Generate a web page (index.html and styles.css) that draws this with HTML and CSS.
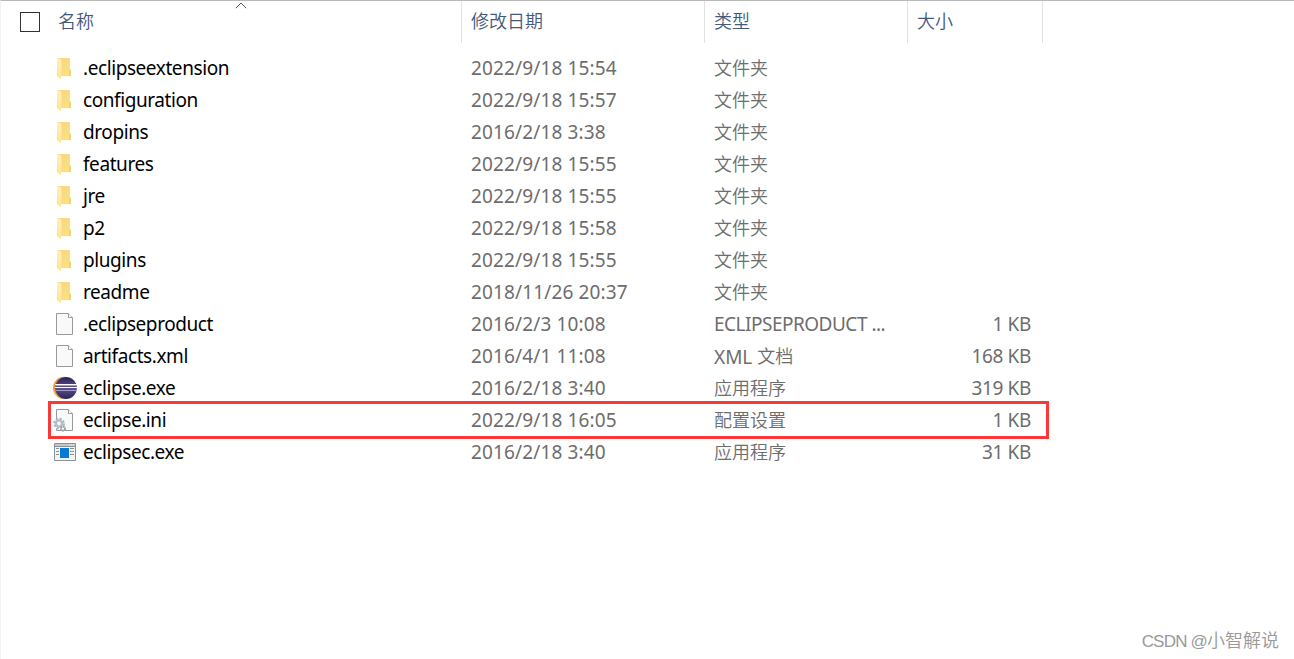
FILE: index.html
```html
<!DOCTYPE html>
<html lang="zh-CN">
<head>
    <meta charset="UTF-8">
    <title>eclipse</title>
    <link rel="stylesheet" href="styles.css">
</head>
<body>
    <svg class="defs" aria-hidden="true">
        <defs>
            <linearGradient id="back" x1="0" y1="0" x2="1" y2="1"><stop offset="0" stop-color="#f5d67d"/><stop offset="1" stop-color="#fddf83"/></linearGradient>
            <linearGradient id="front" x1="0" y1="0" x2="0" y2="1"><stop offset="0" stop-color="#fff0bb"/><stop offset="1" stop-color="#fee493"/></linearGradient>
            <linearGradient id="sun" x1="0" y1="0" x2="0" y2="1"><stop offset="0" stop-color="#ef8a25"/><stop offset="1" stop-color="#f6b04a"/></linearGradient>
            <linearGradient id="moon" x1="0" y1="0" x2="0" y2="1"><stop offset="0" stop-color="#2c2255"/><stop offset="0.5" stop-color="#5b5290"/><stop offset="1" stop-color="#2c2255"/></linearGradient>
        </defs>
        <symbol id="folder" viewBox="0 0 24 24">
            <path d="M4 2h13v11l1 1v6H6z" fill="url(#back)"/>
            <path d="M16 14h2v6h-2z" fill="#f3d174"/>
            <path d="M4 2l4.500 1.500V20H8v3l-4-2.500z" fill="url(#front)"/>
        </symbol>
        <symbol id="file" viewBox="0 0 24 24">
            <path d="M3.500 1.500h12l4 4v17h-16z" fill="#f8f9f9" stroke="#999"/>
            <path d="M15.500 1.500v4h4" fill="#fff" stroke="#999"/>
        </symbol>
        <symbol id="eclipse" viewBox="0 0 24 24">
            <circle cx="11.300" cy="12" r="11.300" fill="url(#sun)"/>
            <circle cx="13.500" cy="12" r="11" fill="#fff"/>
            <circle cx="13" cy="12" r="10.900" fill="url(#moon)"/>
            <path d="M2.500 9.500h21M2.500 14.500h21" stroke="#a39ec2"/>
            <path d="M2 8.500h22M2 11.500h22" stroke="#fff" stroke-width="1.200"/>
        </symbol>
        <symbol id="ini" viewBox="0 0 24 24">
            <use href="#file"/>
            <circle cx="6" cy="15.500" r="5.500" fill="#f8f9f9"/>
            <circle cx="6" cy="15.500" r="4.800" fill="none" stroke="#a9b2ba" stroke-width="2" stroke-dasharray="2.100 1.670"/>
            <circle cx="6" cy="15.500" r="3.100" fill="#f5f7f8" stroke="#b3bec7" stroke-width="2.400"/>
            <circle cx="10" cy="20.500" r="2" fill="#fff" stroke="#929ba3" stroke-width="1.800" stroke-dasharray="1.500 .6"/>
        </symbol>
        <symbol id="app" viewBox="0 0 24 24">
            <path d="M1.500 3.500h21v17h-21z" fill="#f3f4f4" stroke="#899095"/>
            <path d="M2 5h20" stroke="#c3c8cb" stroke-width="2"/>
            <path d="M2 6.500h20" stroke="#899095"/>
            <path d="M16 5h1M18 5h1M20 5h1" stroke="#fff"/>
            <path d="M7 8h9v10H7z" fill="#0a78d7"/>
            <path d="M3 8.500h3M3 11.500h3M3 14.500h3M17 8.500h4M17 11.500h4M17 14.500h4" stroke="#8a8f92"/>
        </symbol>
    </svg>

    <div class="explorer">
        <div class="columns">
            <div class="col select"><span class="checkbox"></span></div>
            <div class="col name">名称
                <svg class="sort" viewBox="0 0 12 7"><path d="M.8 6.200L6 1l5.200 5.200" fill="none" stroke="#555"/></svg>
            </div>
            <div class="col date">修改日期</div>
            <div class="col type">类型</div>
            <div class="col size">大小</div>
        </div>

        <div class="list">
            <div class="row"><svg class="icon"><use href="#folder"/></svg><div class="name">.eclipseextension</div><div class="date">2022/9/18 15:54</div><div class="type"><span class="zh">文件夹</span></div><div class="size"></div></div>
            <div class="row"><svg class="icon"><use href="#folder"/></svg><div class="name">configuration</div><div class="date">2022/9/18 15:57</div><div class="type"><span class="zh">文件夹</span></div><div class="size"></div></div>
            <div class="row"><svg class="icon"><use href="#folder"/></svg><div class="name">dropins</div><div class="date">2016/2/18 3:38</div><div class="type"><span class="zh">文件夹</span></div><div class="size"></div></div>
            <div class="row"><svg class="icon"><use href="#folder"/></svg><div class="name">features</div><div class="date">2022/9/18 15:55</div><div class="type"><span class="zh">文件夹</span></div><div class="size"></div></div>
            <div class="row"><svg class="icon"><use href="#folder"/></svg><div class="name">jre</div><div class="date">2022/9/18 15:55</div><div class="type"><span class="zh">文件夹</span></div><div class="size"></div></div>
            <div class="row"><svg class="icon"><use href="#folder"/></svg><div class="name">p2</div><div class="date">2022/9/18 15:58</div><div class="type"><span class="zh">文件夹</span></div><div class="size"></div></div>
            <div class="row"><svg class="icon"><use href="#folder"/></svg><div class="name">plugins</div><div class="date">2022/9/18 15:55</div><div class="type"><span class="zh">文件夹</span></div><div class="size"></div></div>
            <div class="row"><svg class="icon"><use href="#folder"/></svg><div class="name">readme</div><div class="date">2018/11/26 20:37</div><div class="type"><span class="zh">文件夹</span></div><div class="size"></div></div>
            <div class="row"><svg class="icon"><use href="#file"/></svg><div class="name">.eclipseproduct</div><div class="date">2016/2/3 10:08</div><div class="type caps">ECLIPSEPRODUCT ...</div><div class="size">1 KB</div></div>
            <div class="row"><svg class="icon"><use href="#file"/></svg><div class="name">artifacts.xml</div><div class="date">2016/4/1 11:08</div><div class="type">XML <span class="zh">文档</span></div><div class="size">168 KB</div></div>
            <div class="row"><svg class="icon"><use href="#eclipse"/></svg><div class="name">eclipse.exe</div><div class="date">2016/2/18 3:40</div><div class="type"><span class="zh">应用程序</span></div><div class="size">319 KB</div></div>
            <div class="row marked"><svg class="icon"><use href="#ini"/></svg><div class="name">eclipse.ini</div><div class="date">2022/9/18 16:05</div><div class="type"><span class="zh">配置设置</span></div><div class="size">1 KB</div></div>
            <div class="row"><svg class="icon"><use href="#app"/></svg><div class="name">eclipsec.exe</div><div class="date">2016/2/18 3:40</div><div class="type"><span class="zh">应用程序</span></div><div class="size">31 KB</div></div>
        </div>

        <div class="watermark"><span class="site">CSDN @</span>小智解说</div>
    </div>
</body>
</html>
```
FILE: styles.css
```css
body {
    margin: 0;
    background-color: #fff;
    font-family: "Noto Sans", "Noto Sans CJK SC", sans-serif;
    font-size: 19px;
    color: #6d6d6d;
}
.defs {
    position: absolute;
    width: 0;
    height: 0;
}
.explorer {
    display: flex;
    flex-direction: column;
    box-sizing: border-box;
    height: 659px;
    border-top: 1px solid #bababa;
    border-left: 1px solid #f3f3f3;
    overflow: hidden;
}
.columns {
    display: flex;
    height: 42px;
    font-family: "Noto Sans CJK SC", sans-serif;
    font-weight: 350;
    font-size: 18px;
    line-height: 39px;
    color: #44597a;
}
.col {
    box-sizing: border-box;
    border-right: 1px solid #e2e2e2;
    padding-left: 9px;
}
.columns .select {
    display: flex;
    align-items: center;
    width: 57px;
    padding-left: 19px;
    border: none;
}
.columns .name {
    position: relative;
    width: 404px;
    padding-left: 0;
}
.columns .date {
    width: 243px;
}
.columns .type {
    width: 203px;
}
.columns .size {
    width: 135px;
}
.checkbox {
    box-sizing: border-box;
    width: 20px;
    height: 20px;
    border: 1px solid #333;
}
.sort {
    position: absolute;
    top: 1px;
    left: 177px;
    width: 12px;
    height: 7px;
}
.list {
    padding: 9px 0 0 52px;
}
.row {
    position: relative;
    display: flex;
    align-items: center;
    width: 978px;
    height: 32px;
    line-height: 32px;
    white-space: nowrap;
}
.icon {
    width: 24px;
    height: 24px;
    margin-right: 6px;
}
.row .name {
    width: 388px;
    color: #000;
    letter-spacing: -0.42px;
}
.row .date {
    width: 243px;
    letter-spacing: 0.14px;
}
.row .type {
    width: 203px;
}
.row .caps {
    letter-spacing: -0.5px;
}
.row .size {
    flex: 1;
    text-align: right;
    letter-spacing: -0.35px;
}
.zh {
    position: relative;
    top: -1px;
    font-family: "Noto Sans CJK SC", sans-serif;
    font-weight: 350;
    font-size: 18px;
}
.marked::after {
    content: "";
    position: absolute;
    top: -3px;
    left: -5px;
    width: 995px;
    height: 32px;
    border: 3px solid #fb3838;
}
.watermark {
    margin: auto 15px 4px auto;
    font-family: "Noto Sans CJK SC", sans-serif;
    font-weight: 350;
    font-size: 18px;
    line-height: 26px;
    color: #999;
}
.site {
    font-family: "Liberation Sans", sans-serif;
    font-size: 17px;
    letter-spacing: -0.8px;
}
```
